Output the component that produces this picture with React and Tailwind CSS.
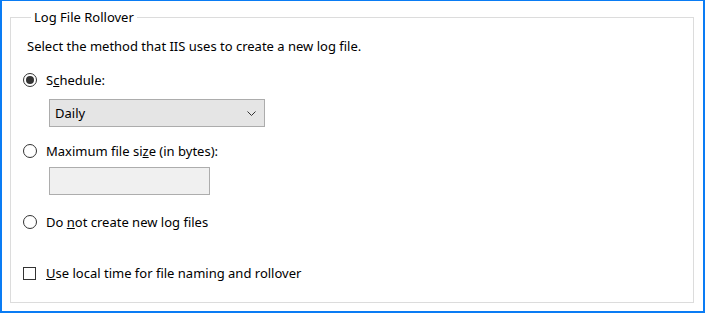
export default function App() {
  return (
    <div
      className="h-[313px] w-[705px] border-2 border-t border-[#0a7cf4] bg-white pb-[8px] pl-[8px] pr-[9px] pt-[7px] text-[13px] leading-[16px] text-black"
      style={{ fontFamily: '"Segoe UI", "Noto Sans", sans-serif' }}
    >
      <fieldset className="h-full border border-[#dcdcdc] pl-[12px] pr-2">
        <legend className="ml-[8px] px-[3px] leading-[18px]">Log File Rollover</legend>

        <p className="mt-[12px] pl-[4px]">Select the method that IIS uses to create a new log file.</p>

        <label className="mt-[18px] flex items-center gap-[9px]">
          <span className="flex h-[14px] w-[14px] items-center justify-center rounded-full border border-[#333]">
            <span className="h-[8px] w-[8px] rounded-full bg-[#333]" />
          </span>
          <span>
            S<span className="underline">c</span>hedule:
          </span>
        </label>

        <div className="ml-[26px] mt-[11px] flex h-[28px] w-[216px] items-center justify-between border border-[#acacac] bg-[#e5e5e5] pl-[5px] pr-[8px]">
          <span>Daily</span>
          <svg width="9" height="5" viewBox="0 0 9 5">
            <path d="M0.5 0.5 L4.5 4.5 L8.5 0.5" fill="none" stroke="#333" strokeWidth="1" />
          </svg>
        </div>

        <label className="mt-[16px] flex items-center gap-[9px]">
          <span className="h-[14px] w-[14px] rounded-full border border-[#333]" />
          <span>
            Maximum file si<span className="underline">z</span>e (in bytes):
          </span>
        </label>

        <div className="ml-[26px] mt-[8px] h-[28px] w-[161px] border border-[#adadad] bg-[#f0f0f0]" />

        <label className="mt-[19px] flex items-center gap-[9px]">
          <span className="h-[14px] w-[14px] rounded-full border border-[#333]" />
          <span>
            Do <span className="underline">n</span>ot create new log files
          </span>
        </label>

        <label className="mt-[35px] flex items-center gap-[10px]">
          <span className="h-[13px] w-[13px] border border-[#333]" />
          <span>
            <span className="underline">U</span>se local time for file naming and rollover
          </span>
        </label>
      </fieldset>
    </div>
  );
}
